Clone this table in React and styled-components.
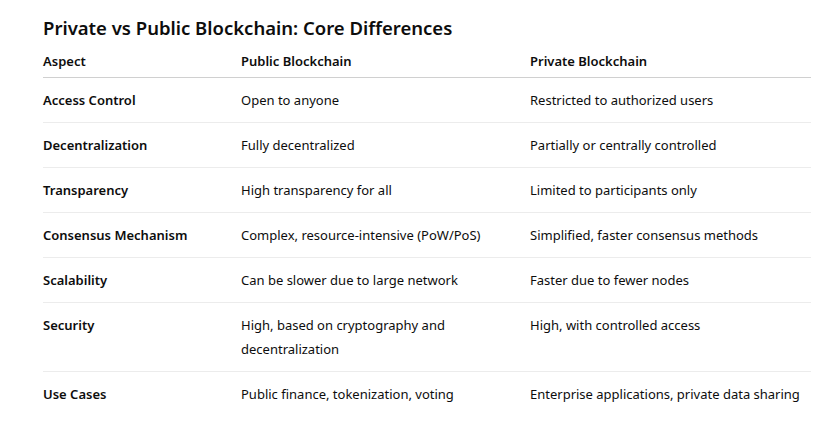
import React from 'react'
import styled, { createGlobalStyle } from 'styled-components'

const GlobalStyle = createGlobalStyle`
  body {
    margin: 0;
    background: #fff;
    font-family: 'Noto Sans', 'Open Sans', sans-serif;
    color: #0d0d0d;
  }
`

const Page = styled.div`
  padding: 14px 15px 0 43px;
  width: 826px;
  box-sizing: border-box;
`

const Title = styled.h3`
  margin: 0 0 7px;
  font-size: 18.5px;
  font-weight: 600;
  line-height: 28px;
`

const Table = styled.div`
  display: grid;
  grid-template-columns: 198px 289px 1fr;
  width: 768px;
  font-size: 13px;
  line-height: 24px;
`

const Cell = styled.div`
  padding: ${p => (p.head ? '0 0 4px' : '10px 0')};
  font-weight: ${p => (p.bold ? 600 : 400)};
  border-bottom: 1px solid ${p => (p.head ? '#d0d0d0' : p.last ? 'transparent' : '#ececec')};
`

const rows = [
  ['Access Control', 'Open to anyone', 'Restricted to authorized users'],
  ['Decentralization', 'Fully decentralized', 'Partially or centrally controlled'],
  ['Transparency', 'High transparency for all', 'Limited to participants only'],
  ['Consensus Mechanism', 'Complex, resource-intensive (PoW/PoS)', 'Simplified, faster consensus methods'],
  ['Scalability', 'Can be slower due to large network', 'Faster due to fewer nodes'],
  ['Security', 'High, based on cryptography and decentralization', 'High, with controlled access'],
  ['Use Cases', 'Public finance, tokenization, voting', 'Enterprise applications, private data sharing'],
]

export default function App() {
  return (
    <Page>
      <GlobalStyle />
      <Title>Private vs Public Blockchain: Core Differences</Title>
      <Table>
        <Cell head bold>Aspect</Cell>
        <Cell head bold>Public Blockchain</Cell>
        <Cell head bold>Private Blockchain</Cell>
        {rows.map((r, i) => (
          <React.Fragment key={r[0]}>
            <Cell bold last={i === rows.length - 1}>{r[0]}</Cell>
            <Cell last={i === rows.length - 1}>{r[1]}</Cell>
            <Cell last={i === rows.length - 1}>{r[2]}</Cell>
          </React.Fragment>
        ))}
      </Table>
    </Page>
  )
}
